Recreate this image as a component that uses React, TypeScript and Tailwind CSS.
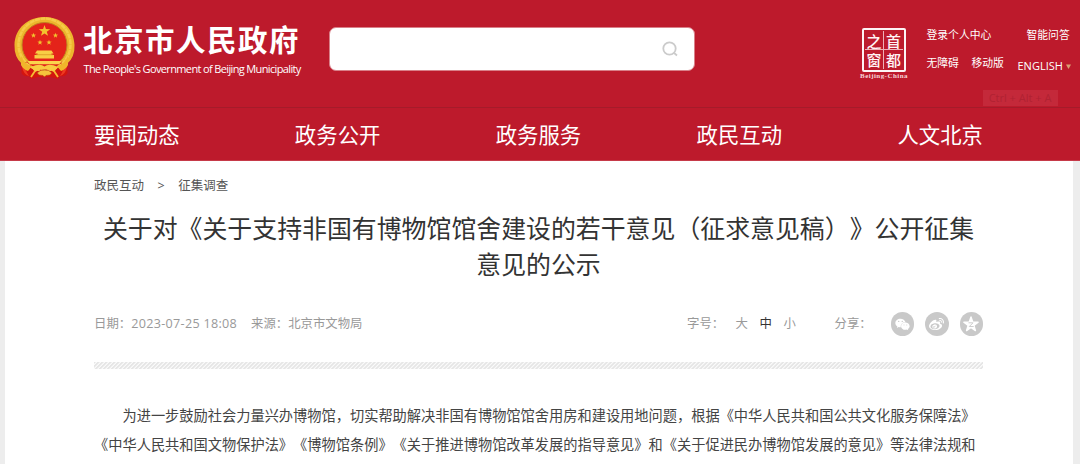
import React from "react";
import { FaWeixin, FaWeibo } from "react-icons/fa";

const nav = ["要闻动态", "政务公开", "政务服务", "政民互动", "人文北京"];

const star = (cx: number, cy: number, r: number) =>
  Array.from({ length: 10 }, (_, i) => {
    const a = -Math.PI / 2 + (i * Math.PI) / 5;
    const d = i % 2 ? r * 0.4 : r;
    return `${(cx + d * Math.cos(a)).toFixed(2)},${(cy + d * Math.sin(a)).toFixed(2)}`;
  }).join(" ");

function Emblem() {
  return (
    <svg width="62" height="66" viewBox="0 0 62 66" className="block shrink-0">
      <path d="M8 42 L7.500 57 Q10 61 15 60 L17 63 L24 61 H37 L44 63 L46 60 Q51 61 53.500 57 L53 42 Z" fill="#d3150f" />
      <path d="M8 50 Q9 58 15 60 Q11 55 12 49Z M53 50 Q52 58 46 60 Q50 55 49 49Z" fill="#ef3a21" />
      <path d="M8 48 Q0 41 .5 29 C1 12 14 1 30.500 1 C47 1 60 12 60.500 29 Q61 41 53 48 L45 44 H16Z" fill="#edb62d" />
      <circle cx="30.500" cy="28.500" r="26" fill="none" stroke="#f5cb48" strokeWidth="2.500" strokeDasharray="5 .6" />
      <circle cx="30.500" cy="29" r="22.500" fill="#e4231a" stroke="#c08420" strokeWidth="1" />
      <polygon points={star(30.5, 15, 6)} fill="#f2c32e" />
      <polygon points={star(19.5, 19.5, 2.8)} fill="#f2c32e" />
      <polygon points={star(41.5, 19.5, 2.8)} fill="#f2c32e" />
      <polygon points={star(26, 26.5, 2.8)} fill="#f2c32e" />
      <polygon points={star(35, 26.5, 2.8)} fill="#f2c32e" />
      <path d="M23 34.500 H37.500 L39.500 37.500 H37.500 V39 H40 V42.500 H20.500 V39 H23.500 V37.500 H21Z" fill="#f8cd45" />
      <path d="M22 38.700H39" stroke="#d5921e" strokeWidth=".7" />
      <path d="M13 45 H48 L45 48.500 H16Z" fill="#fbd44c" />
      <path d="M16 48.500 H45 L40 51 H21Z" fill="#e2231a" />
      <path d="M7 40 Q11 49 18 50 Q15 54 14 55 Q9 53 7 49Z M54 40 Q50 49 43 50 Q46 54 47 55 Q52 53 54 49Z" fill="#f1b52b" />
      <path d="M17 51 Q26 47 30.500 50.500 Q35 47 44 51 L40 56 Q35 53 30.500 53 Q26 53 21 56Z" fill="#f8cb41" />
      <path d="M21 55 L17 61 M40 55 L44 61" stroke="#f6bc33" strokeWidth="1.800" />
      <path d="M23 57 Q26 53.500 30.500 54 Q35 53.500 38 57 Q36 60 32 59.500 L30.500 61 L29 59.500 Q25 60 23 57Z" fill="#f5c43c" stroke="#b63814" strokeWidth=".6" />
    </svg>
  );
}

function Seal() {
  return (
    <div className="ml-[163.500px] mt-[28px] flex w-[52px] shrink-0 flex-col items-center">
      <div className="grid h-[44px] w-[44px] grid-cols-2 grid-rows-2 rounded-[2px] border-2 border-[#fdf3f4] p-[1px] font-['Noto_Sans_CJK_SC',sans-serif] text-[15px] font-medium leading-[15px] text-[#fff3f4]">
        <span className="flex items-center justify-center border-b border-r border-[#eeb0b7]">之</span>
        <span className="flex items-center justify-center border-b border-[#eeb0b7]">首</span>
        <span className="flex items-center justify-center border-r border-[#eeb0b7]">窗</span>
        <span className="flex items-center justify-center">都</span>
      </div>
      <span className="whitespace-nowrap font-['Liberation_Serif',serif] text-[7px] font-bold leading-[8px] tracking-[0.450px] text-[#f6d5d9]">
        Beijing-China
      </span>
    </div>
  );
}

export default function App() {
  return (
    <div className="h-[464px] w-[1080px] overflow-hidden bg-[#ededed] font-['Open_Sans','Noto_Sans_CJK_SC',sans-serif] [text-spacing-trim:space-all]">
      <header className="flex h-[107px] bg-[#bd1a2c] text-white">
        <div className="ml-[14px] mt-[16px]">
          <Emblem />
        </div>
        <div className="ml-[7px] mt-[20px] w-[230px] shrink-0">
          <div className="whitespace-nowrap font-['Noto_Sans_CJK_SC',sans-serif] text-[29.500px] font-bold leading-[36px] tracking-[1.500px]">
            北京市人民政府
          </div>
          <div className="mt-[3px] whitespace-nowrap pl-[0.500px] font-['Open_Sans',sans-serif] text-[11px] leading-[20px] tracking-[-0.640px]">
            The People's Government of Beijing Municipality
          </div>
        </div>
        <div className="ml-[16px] mt-[27px] flex h-[44px] w-[365.500px] shrink-0 items-center justify-end rounded-[7px] border border-[#d98089] bg-white pr-[15px]">
          <svg width="18" height="18" viewBox="0 0 18 18" fill="none" stroke="#cbcbcb" strokeWidth="1.800">
            <circle cx="8.500" cy="8.500" r="6.200" />
            <path d="M12.800 12.800 L16 15.500" />
          </svg>
        </div>
        <Seal />
        <div className="ml-[16.500px] mt-[25px] w-[150px] shrink-0 text-[10.800px] leading-[20px]">
          <div className="flex">
            <span className="w-[100px]">登录个人中心</span>
            <span>智能问答</span>
          </div>
          <div className="mt-[8px] flex h-[25px] items-start whitespace-nowrap">
            <span className="w-[45px]">无障碍</span>
            <span className="w-[46px]">移动版</span>
            <span className="flex items-center gap-[3px] pt-[3px] text-[11px]">
              ENGLISH
              <svg width="5" height="5" viewBox="0 0 5 5" className="block">
                <path d="M0 .5H5L2.500 5Z" fill="#d8a173" />
              </svg>
            </span>
          </div>
          <div className="ml-[56px] mt-[12px] h-[16px] w-[75px] whitespace-nowrap bg-[#c4293a] text-center text-[11px] leading-[16px] text-[#b02232]">
            Ctrl + Alt + A
          </div>
        </div>
      </header>
      <nav className="flex h-[54px] items-center justify-between border-b border-t border-b-[#c63a49] border-t-[#a51b2a] bg-[#bd1a2c] pl-[94px] pr-[97px] pt-[2px] text-[21.400px] leading-[30px] text-white">
        {nav.map((t) => (
          <span key={t}>{t}</span>
        ))}
      </nav>
      <main className="ml-[5px] mr-[7px] h-[303px] bg-white pl-[89px] pr-[90px]">
        <div className="flex gap-[13.500px] pt-[15px] text-[12.500px] leading-[20px] text-[#555]">
          <span>政民互动</span>
          <span>&gt;</span>
          <span>征集调查</span>
        </div>
        <h1 className="mt-[13px] whitespace-nowrap text-center font-['Noto_Sans_CJK_SC',sans-serif] text-[24.900px] font-normal leading-[36px] text-[#333]">
          关于对《关于支持非国有博物馆馆舍建设的若干意见（征求意见稿）》公开征集
          <br />
          意见的公示
        </h1>
        <div className="mt-[31px] flex h-[24px] items-center whitespace-nowrap text-[12.400px] leading-[24px] text-[#999]">
          <span className="w-[157px]">
            日期：<span className="text-[12.600px] tracking-[0.300px]">2023-07-25 18:08</span>
          </span>
          <span>来源：北京市文物局</span>
          <span className="ml-auto w-[48.500px]">字号：</span>
          <span className="w-[24px]">大</span>
          <span className="w-[24px] text-[#333]">中</span>
          <span className="w-[51px]">小</span>
          <span className="w-[56px]">分享：</span>
          <span className="flex gap-[11px] text-white">
            <span className="flex h-[23.500px] w-[23.500px] items-center justify-center rounded-full bg-[#c9c9c9]">
              <FaWeixin size={15} />
            </span>
            <span className="flex h-[23.500px] w-[23.500px] items-center justify-center rounded-full bg-[#c9c9c9]">
              <FaWeibo size={15} />
            </span>
            <span className="flex h-[23.500px] w-[23.500px] items-center justify-center rounded-full bg-[#c9c9c9]">
              <svg width="16" height="16" viewBox="0 0 16 16">
                <polygon points={star(8, 8.5, 7.5)} fill="#fff" stroke="#fff" strokeWidth="1.400" strokeLinejoin="round" />
                <path d="M5.500 6.800H10L6.300 10.500H10.700" fill="none" stroke="#c9c9c9" strokeWidth=".9" />
              </svg>
            </span>
          </span>
        </div>
        <div className="mt-[26px] h-[7px] bg-[repeating-linear-gradient(135deg,#e6e6e6_0px,#e6e6e6_1.100px,#fafafa_1.700px,#fafafa_2.300px,#e6e6e6_2.830px)]" />
        <div className="mt-[32px] whitespace-nowrap font-['Noto_Sans_CJK_SC',sans-serif] text-[14.230px] leading-[28.500px] text-[#444]">
          <p className="indent-[28.440px]">
            为进一步鼓励社会力量兴办博物馆，切实帮助解决非国有博物馆馆舍用房和建设用地问题，根据《中华人民共和国公共文化服务保障法》
          </p>
          <p>《中华人民共和国文物保护法》《博物馆条例》《关于推进博物馆改革发展的指导意见》和《关于促进民办博物馆发展的意见》等法律法规和</p>
        </div>
      </main>
    </div>
  );
}
